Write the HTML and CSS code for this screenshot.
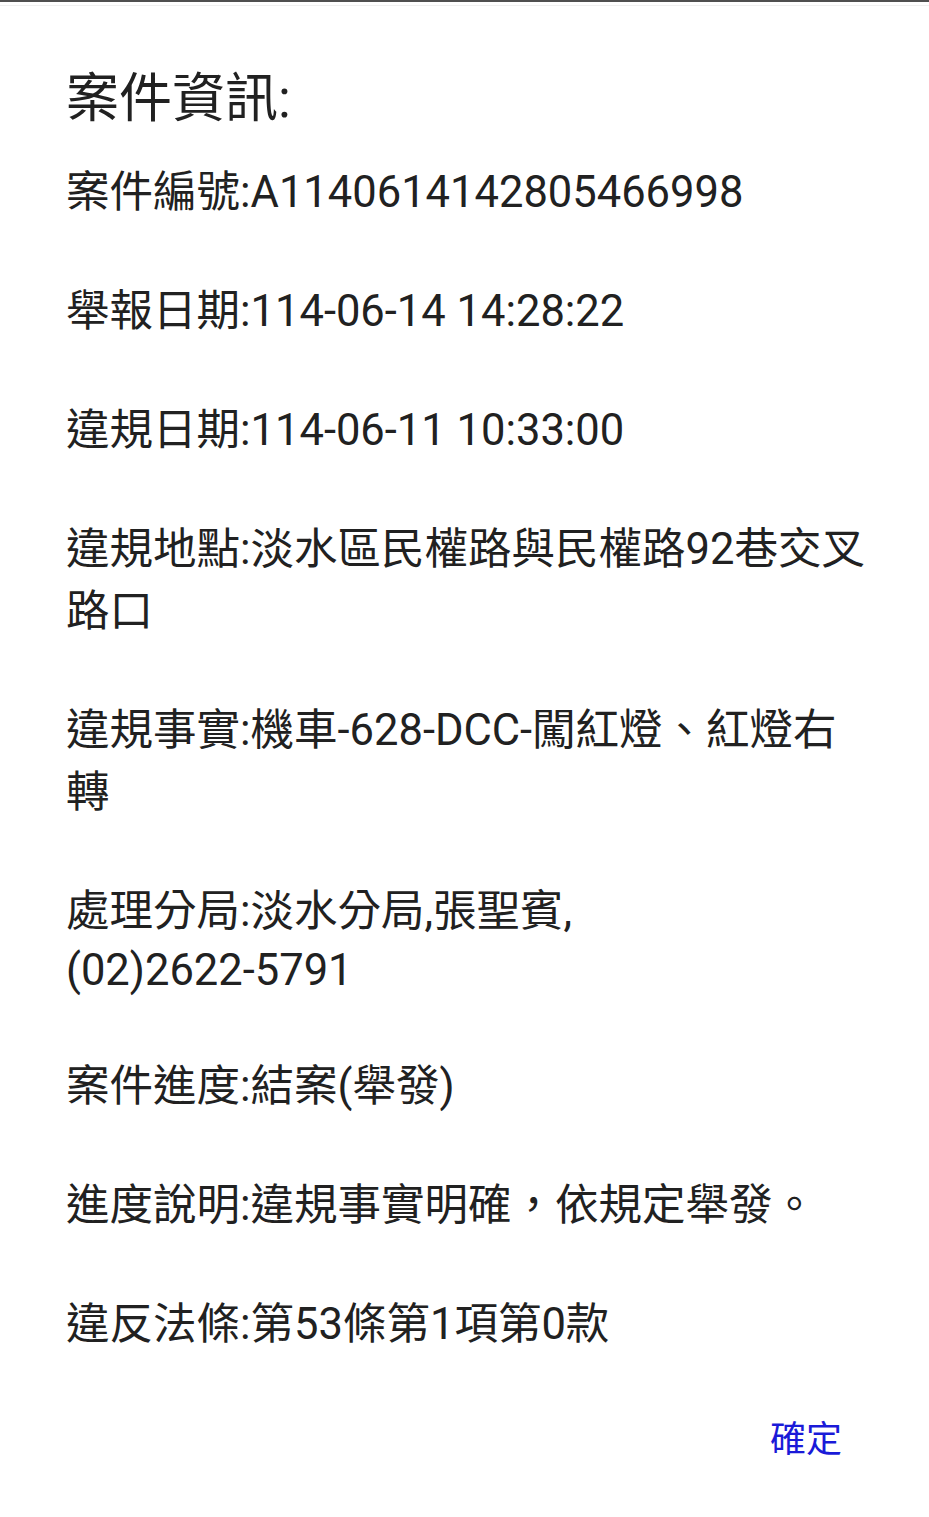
FILE: index.html
```html
<!DOCTYPE html>
<html lang="zh-Hant">
<head>
<meta charset="utf-8">
<title>案件資訊</title>
<link rel="stylesheet" href="styles.css">
</head>
<body>
<div class="dialog">
  <div class="edge"></div>
  <div class="shade"></div>
  <div class="content">
    <h1 class="title">案件資訊:</h1>
    <p class="item">案件編號:A1140614142805466998</p>
    <p class="item">舉報日期:114-06-14 14:28:22</p>
    <p class="item">違規日期:114-06-11 10:33:00</p>
    <p class="item"><span class="ln">違規地點:淡水區民權路與民權路92巷交叉</span><span class="ln">路口</span></p>
    <p class="item"><span class="ln">違規事實:機車-628-DCC-闖紅燈、紅燈右</span><span class="ln">轉</span></p>
    <p class="item"><span class="ln">處理分局:淡水分局,張聖賓,</span><span class="ln latin">(02)2622-5791</span></p>
    <p class="item">案件進度:結案(舉發)</p>
    <p class="item">進度說明:違規事實明確，依規定舉發。</p>
    <p class="item">違反法條:第53條第1項第0款</p>
  </div>
  <div class="actions">
    <span class="btn">確定</span>
  </div>
</div>
</body>
</html>
```

FILE: styles.css
```css
html, body {
  margin: 0;
  padding: 0;
  background: #ffffff;
}

body {
  width: 929px;
  height: 1517px;
  overflow: hidden;
  font-family: Roboto, "Noto Sans CJK TC", "Noto Sans", sans-serif;
  color: #212121;
}

.dialog {
  display: flex;
  flex-direction: column;
}

.edge {
  height: 2px;
  background: #4f4f4f;
}

.shade {
  height: 1px;
  margin-top: 3px;
  background: #f0f0f0;
}

.content {
  padding: 61px 0 0 66px;
}

.title {
  margin: 0 0 31px 0;
  font-size: 53px;
  line-height: 64px;
  font-weight: 400;
}

.item {
  margin: 0 0 57px 0;
  font-size: 43.5px;
  line-height: 62px;
  font-weight: 400;
  white-space: nowrap;
}

.item:last-child {
  margin-bottom: 0;
}

.ln {
  display: block;
}

.ln.latin {
  line-height: 56px;
}

.actions {
  display: flex;
  justify-content: flex-end;
  padding: 60px 87px 0 0;
}

.btn {
  font-size: 36px;
  line-height: 48px;
  color: #1a1ad8;
}
```
